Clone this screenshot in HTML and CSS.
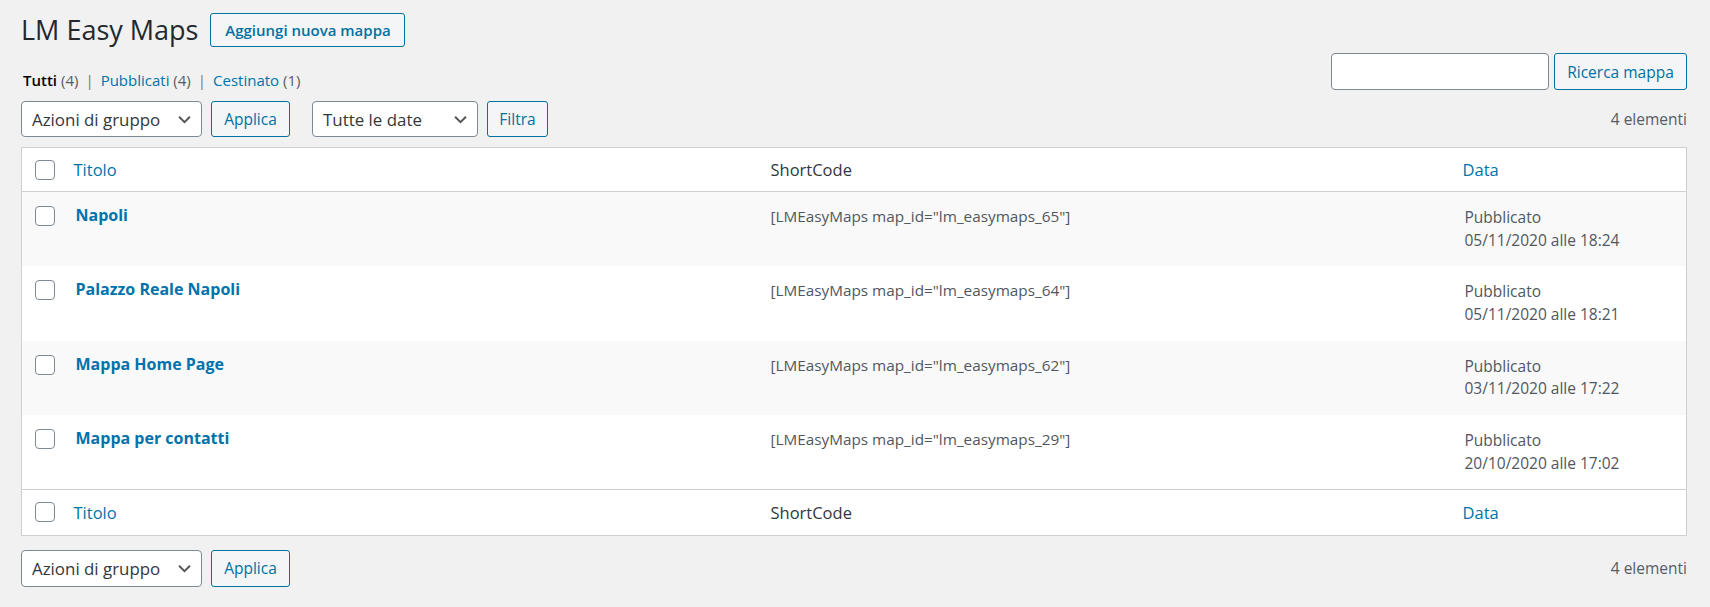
FILE: index.html
```html
<!DOCTYPE html>
<html lang="it">
<head>
<meta charset="utf-8">
<title>LM Easy Maps</title>
<link rel="stylesheet" href="styles.css">
</head>
<body>
<div class="wrap">
  <div class="head">
    <h1 class="title">LM Easy Maps</h1>
    <a class="btn btn-add" href="#">Aggiungi nuova mappa</a>
  </div>

  <div class="top-row">
    <ul class="subsubsub">
      <li><a class="current" href="#">Tutti <span class="count">(4)</span></a><span class="sep">|</span></li>
      <li><a href="#">Pubblicati <span class="count">(4)</span></a><span class="sep">|</span></li>
      <li><a href="#">Cestinato <span class="count">(1)</span></a></li>
    </ul>
    <div class="search-box">
      <input class="search-input" type="search">
      <button class="btn btn-secondary">Ricerca mappa</button>
    </div>
  </div>

  <div class="tablenav">
    <div class="actions">
      <div class="select"><span>Azioni di gruppo</span><svg class="chev" viewBox="0 0 12 8"><path d="M1 1.5l5 5 5-5" fill="none" stroke="#555" stroke-width="1.8"/></svg></div>
      <button class="btn btn-secondary btn-applica">Applica</button>
    </div>
    <div class="actions">
      <div class="select select-date"><span>Tutte le date</span><svg class="chev" viewBox="0 0 12 8"><path d="M1 1.5l5 5 5-5" fill="none" stroke="#555" stroke-width="1.8"/></svg></div>
      <button class="btn btn-secondary btn-filtra">Filtra</button>
    </div>
    <div class="num">4 elementi</div>
  </div>

  <table class="list">
    <thead>
      <tr>
        <th class="cb"><span class="checkbox"></span></th>
        <th class="col-title"><a href="#">Titolo</a></th>
        <th class="col-code">ShortCode</th>
        <th class="col-date"><a href="#">Data</a></th>
      </tr>
    </thead>
    <tbody>
      <tr class="alt">
        <td class="cb"><span class="checkbox"></span></td>
        <td class="col-title"><a class="row-title" href="#">Napoli</a></td>
        <td class="col-code">[LMEasyMaps map_id="lm_easymaps_65"]</td>
        <td class="col-date">Pubblicato<br>05/11/2020 alle 18:24</td>
      </tr>
      <tr>
        <td class="cb"><span class="checkbox"></span></td>
        <td class="col-title"><a class="row-title" href="#">Palazzo Reale Napoli</a></td>
        <td class="col-code">[LMEasyMaps map_id="lm_easymaps_64"]</td>
        <td class="col-date">Pubblicato<br>05/11/2020 alle 18:21</td>
      </tr>
      <tr class="alt">
        <td class="cb"><span class="checkbox"></span></td>
        <td class="col-title"><a class="row-title" href="#">Mappa Home Page</a></td>
        <td class="col-code">[LMEasyMaps map_id="lm_easymaps_62"]</td>
        <td class="col-date">Pubblicato<br>03/11/2020 alle 17:22</td>
      </tr>
      <tr>
        <td class="cb"><span class="checkbox"></span></td>
        <td class="col-title"><a class="row-title" href="#">Mappa per contatti</a></td>
        <td class="col-code">[LMEasyMaps map_id="lm_easymaps_29"]</td>
        <td class="col-date">Pubblicato<br>20/10/2020 alle 17:02</td>
      </tr>
    </tbody>
    <tfoot>
      <tr>
        <th class="cb"><span class="checkbox"></span></th>
        <th class="col-title"><a href="#">Titolo</a></th>
        <th class="col-code">ShortCode</th>
        <th class="col-date"><a href="#">Data</a></th>
      </tr>
    </tfoot>
  </table>

  <div class="tablenav tablenav-bottom">
    <div class="actions">
      <div class="select"><span>Azioni di gruppo</span><svg class="chev" viewBox="0 0 12 8"><path d="M1 1.5l5 5 5-5" fill="none" stroke="#555" stroke-width="1.8"/></svg></div>
      <button class="btn btn-secondary btn-applica">Applica</button>
    </div>
    <div class="num">4 elementi</div>
  </div>
</div>
</body>
</html>
```

FILE: styles.css
```css
* { box-sizing: border-box; }
html, body { margin: 0; padding: 0; }
body {
  background: #f1f1f1;
  color: #444;
  font-family: "Open Sans", "Noto Sans", sans-serif;
  font-size: 16px;
  width: 1710px;
  height: 607px;
  overflow: hidden;
}
a { color: #0073aa; text-decoration: none; }

.wrap { padding: 13px 23px 0 21px; }

.head { display: flex; align-items: center; height: 34px; }
.title {
  margin: 0;
  font-size: 27px;
  font-weight: 400;
  color: #23282d;
  line-height: 34px;
}
.btn {
  display: inline-flex;
  align-items: center;
  justify-content: center;
  border: 1px solid #0071a1;
  border-radius: 3px;
  background: #f3f5f6;
  color: #0071a1;
  font-family: inherit;
  font-size: 15.5px;
  padding: 0 12px;
  cursor: pointer;
}
.btn-add {
  margin-left: 12px;
  height: 34px;
  width: 195px;
  font-weight: 600;
  font-size: 15px;
}

.top-row {
  display: flex;
  justify-content: space-between;
  margin-top: 6px;
  height: 37px;
}
.subsubsub {
  list-style: none;
  margin: 17px 0 0 2px;
  padding: 0;
  display: flex;
  font-size: 15px;
  line-height: 20px;
  color: #666;
}
.subsubsub a { color: #0073aa; }
.subsubsub a.current { color: #000; font-weight: 600; }
.subsubsub .count { color: #555d66; font-weight: 400; }
.subsubsub .sep { margin: 0 7px; color: #777; }

.search-box { display: flex; gap: 5px; }
.search-input {
  width: 218px;
  height: 37px;
  border: 1px solid #7e8993;
  border-radius: 4px;
  background: #fff;
  margin: 0;
}
.search-box .btn { width: 133px; height: 37px; }

.tablenav {
  display: flex;
  align-items: center;
  height: 36px;
  margin-top: 11px;
}
.actions { display: flex; gap: 9px; margin-right: 22px; }
.select {
  display: flex;
  align-items: center;
  justify-content: space-between;
  width: 181px;
  height: 36px;
  border: 1px solid #7e8993;
  border-radius: 4px;
  background: #fff;
  color: #32373c;
  font-size: 16.9px;
  padding: 0 10px 0 10px;
}
.select-date { width: 166px; }
.chev { width: 13px; height: 9px; flex: none; }
.btn-applica { width: 79px; height: 36px; }
.btn-filtra { width: 61px; height: 36px; }
.num { margin-left: auto; font-size: 15.5px; color: #555d66; }

.list {
  margin-top: 10px;
  width: 100%;
  border-collapse: collapse;
  background: #fff;
  border: 1px solid #ccd0d4;
  table-layout: fixed;
}
.list th {
  font-weight: 400;
  text-align: left;
  font-size: 16.5px;
  color: #32373c;
  height: 44px;
  padding: 0 12px;
  vertical-align: middle;
}
.list tfoot th { height: 45.5px; }
.list thead tr { border-bottom: 1px solid #ccd0d4; }
.list tfoot tr { border-top: 1px solid #ccd0d4; }
.list td {
  vertical-align: top;
  height: 74.5px;
  padding: 13px 12px 0;
  font-size: 15px;
  color: #50575e;
}
.list tr.alt td { background: #f9f9f9; }

.list .cb { width: 40px; padding: 0 0 0 13px; }
.list td.cb { padding-top: 14px; }
.checkbox {
  display: block;
  width: 20px;
  height: 20px;
  border: 1px solid #7e8993;
  border-radius: 4px;
  background: #fff;
}
.list .col-title { width: 697px; }
.list th.col-title { padding-left: 12px; }
.list td.col-title { padding-left: 14px; padding-top: 12px; }
.row-title { font-weight: 700; font-size: 16px; }
.list .col-code { width: 692px; }
.list td.col-code { font-size: 15.3px; padding-top: 14px; }
.list td.col-date { font-size: 15.5px; line-height: 22.5px; padding-top: 14px; padding-left: 14px; }

.tablenav-bottom { margin-top: 14px; height: 37px; }
.tablenav-bottom .select, .tablenav-bottom .btn-applica { height: 37px; }
```
